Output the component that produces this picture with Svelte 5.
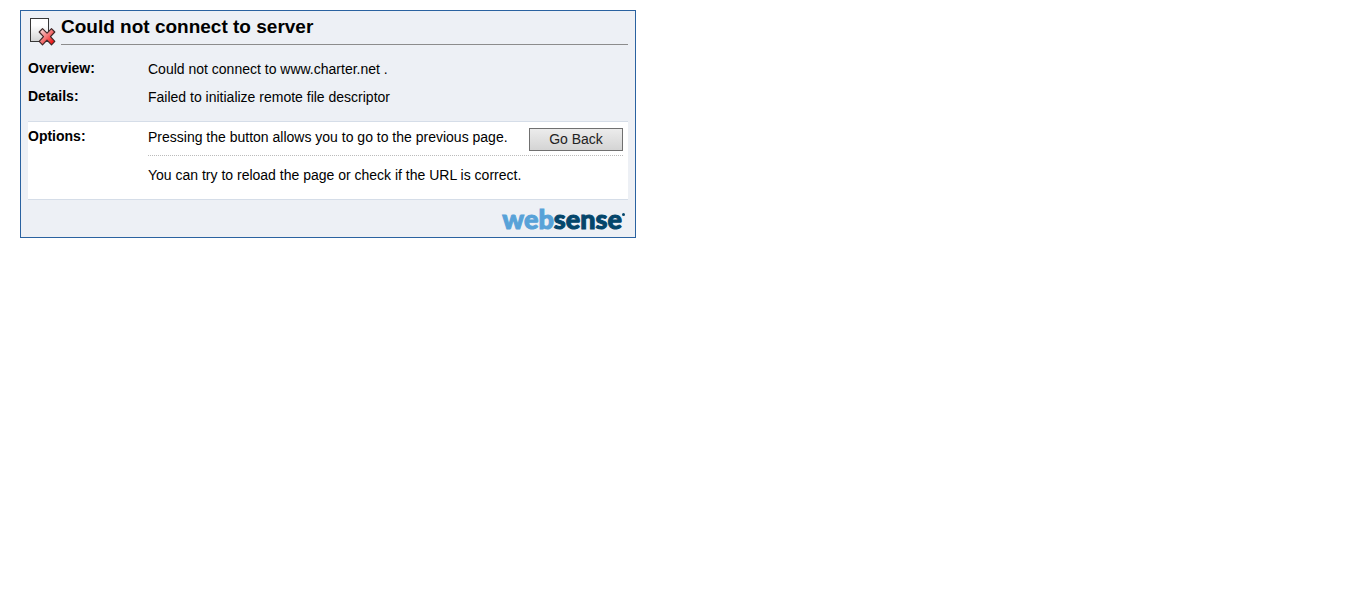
<script>
  const details = [
    { label: 'Overview:', text: 'Could not connect to www.charter.net .' },
    { label: 'Details:', text: 'Failed to initialize remote file descriptor' }
  ];

  function goBack() {
    history.back();
  }
</script>

<main class="panel">
  <header class="head">
    <svg class="icon" width="28" height="30" viewBox="0 0 28 30" aria-hidden="true">
      <defs>
        <linearGradient id="sheet" x1="0" y1="0" x2="0" y2="1">
          <stop offset="0.3" stop-color="#ffffff" />
          <stop offset="1" stop-color="#d4d4d4" />
        </linearGradient>
        <linearGradient id="cross" x1="0" y1="0" x2="1" y2="1">
          <stop offset="0.15" stop-color="#f6c4c4" />
          <stop offset="0.5" stop-color="#f47272" />
          <stop offset="0.85" stop-color="#f01818" />
        </linearGradient>
      </defs>
      <rect x="2.5" y="1.5" width="18" height="23" fill="url(#sheet)" stroke="#383838" />
      <path
        d="M14.5 11.7 L19 16.2 L23.5 11.7 L26.8 15 L22.5 19.7 L26.8 24.4 L23.5 27.8 L19 23.2 L14.5 27.8 L11.2 24.4 L15.5 19.7 L11.2 15 Z"
        fill="url(#cross)"
        stroke="#402828"
        stroke-width="1.2"
        stroke-linejoin="round"
      />
    </svg>
    <h1>Could not connect to server</h1>
  </header>

  <dl class="details">
    {#each details as row}
      <div class="row">
        <dt>{row.label}</dt>
        <dd>{row.text}</dd>
      </div>
    {/each}
  </dl>

  <section class="options">
    <h2>Options:</h2>
    <div class="choices">
      <div class="choice">
        <p>Pressing the button allows you to go to the previous page.</p>
        <button type="button" onclick={goBack}>Go Back</button>
      </div>
      <p class="hint">You can try to reload the page or check if the URL is correct.</p>
    </div>
  </section>

  <footer>
    <div class="logo"><span class="web">web</span><span>sense</span><i class="mark"></i></div>
  </footer>
</main>

<style>
  :global(body) {
    background: #fff;
  }

  .panel {
    box-sizing: border-box;
    max-width: 616px;
    margin: 10px 20px;
    padding: 6px 7px 0;
    border: 1px solid #2a62a0;
    background: #edf0f5;
    color: #000;
    font: 14px/20px "Liberation Sans", Arial, sans-serif;
  }

  .head {
    display: flex;
    gap: 5px;
  }

  .icon {
    flex: none;
  }

  h1 {
    flex: 1;
    height: 27px;
    margin: 0;
    border-bottom: 1px solid #8c8c8c;
    font-size: 19px;
    line-height: 20px;
  }

  .details {
    margin: 0;
    padding: 7px 0 11px;
  }

  .row {
    display: flex;
    padding: 4px 0;
  }

  dt,
  h2 {
    flex: none;
    width: 120px;
    margin: 0;
    font-size: 14px;
    font-weight: bold;
    line-height: 20px;
  }

  dd,
  p {
    margin: 0;
  }

  dd {
    padding-top: 1px;
    margin-bottom: -1px;
  }

  .options {
    display: flex;
    padding: 4px 5px 14px 0;
    border: solid #d5dde8;
    border-width: 1px 0;
    background: #fff;
  }

  .choices {
    flex: 1;
  }

  .choice {
    display: flex;
    align-items: flex-start;
    justify-content: space-between;
    padding: 1px 0 4px;
    border-bottom: 1px dotted #bbb;
  }

  button {
    width: 94px;
    height: 23px;
    margin-top: 1px;
    padding: 0 0 1px;
    border: 1px solid #707070;
    border-radius: 0;
    background: linear-gradient(#ececec, #d4d4d4);
    color: #222;
    font: 14px "Liberation Sans", Arial, sans-serif;
  }

  .hint {
    padding-top: 9px;
  }

  footer {
    display: flex;
    justify-content: flex-end;
    padding: 4px 3px 4px 0;
  }

  .logo {
    display: flex;
    color: #04466b;
    font: 900 27px/29px Lato, sans-serif;
    -webkit-text-stroke: 1px currentColor;
  }

  .web {
    color: #58a2d8;
  }

  .mark {
    width: 3px;
    height: 3px;
    margin-top: 9px;
    border-radius: 50%;
    background: #04466b;
  }
</style>
